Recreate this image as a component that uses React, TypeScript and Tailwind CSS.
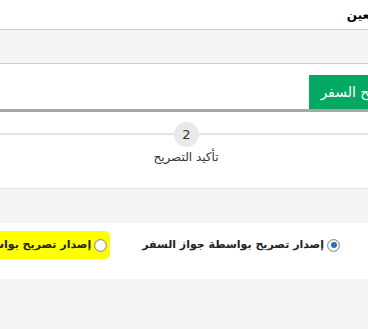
import React from "react";

function Radio({ checked }: { checked?: boolean }) {
  return (
    <span className="inline-flex h-[13px] w-[13px] shrink-0 items-center justify-center rounded-full border border-[#8f8f8f] bg-[#e6e6e6]">
      <span className="flex h-[9px] w-[9px] items-center justify-center rounded-full bg-white">
        {checked ? <span className="h-[6px] w-[6px] rounded-full bg-[#2a6fb8]" /> : null}
      </span>
    </span>
  );
}

export default function App() {
  const font = { fontFamily: '"DejaVu Sans", "Noto Sans", sans-serif' };
  return (
    <div dir="rtl" style={font} className="h-[329px] w-[368px] overflow-hidden bg-white text-[#222]">
      <div className="flex h-[29px] items-center overflow-hidden">
        <span className="mr-[-18px] whitespace-nowrap text-[12px] font-bold text-black">المعين</span>
      </div>
      <div className="h-[35px] border-y border-[#cccccc] bg-[#f5f5f5]" />
      <div className="flex h-[45px] items-end overflow-hidden">
        <div className="mr-[-40px] flex h-[34px] items-center bg-[#03a862] px-[11px] text-[14px] whitespace-nowrap text-white">
          تصريح السفر
        </div>
      </div>
      <div className="h-[3px] bg-[#a6a6a6]" />
      <div className="relative h-[77px] border-b border-[#e6e6e6]">
        <div className="absolute top-[21px] right-0 left-0 h-[2px] bg-[#e3e3e3]" />
        <div className="absolute top-[10px] left-[174px] flex w-[25px] flex-col items-center">
          <div className="flex h-[25px] w-[25px] items-center justify-center rounded-full bg-[#e9e9e9] text-[13px] text-[#333]">2</div>
        </div>
        <div className="absolute top-[36px] left-[136px] w-[100px] text-center text-[12px] text-[#333]">تأكيد التصريح</div>
      </div>
      <div className="h-[34px] bg-[#f4f4f4]" />
      <div className="flex h-[56px] items-center gap-[32px] overflow-hidden bg-white pr-[28px] pb-[12px] text-[11px] font-bold text-[#222]">
        <label className="flex shrink-0 items-center gap-[3px] whitespace-nowrap">
          <Radio checked />
          <span>إصدار تصريح بواسطة جواز السفر</span>
        </label>
        <label className="flex shrink-0 items-center gap-[3px] whitespace-nowrap bg-[#ffff00] py-[6px] pr-[3px] rounded-r-[5px]">
          <Radio />
          <span>إصدار تصريح بواسطة الهوية</span>
        </label>
      </div>
      <div className="h-[50px] bg-[#f4f4f4]" />
    </div>
  );
}
